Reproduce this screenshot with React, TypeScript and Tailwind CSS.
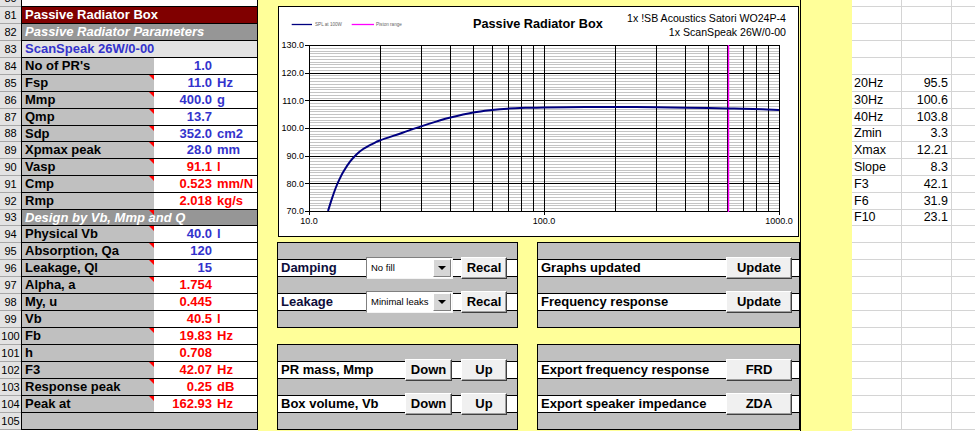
import React from "react";

type Kind = "top" | "title" | "section" | "driver" | "data" | "empty";

type Row = {
  n: number;
  kind: Kind;
  text?: string;
  num?: string;
  unit?: string;
  red?: boolean;
  note?: boolean;
};

const rows: Row[] = [
  { n: 80, kind: "top" },
  { n: 81, kind: "title", text: "Passive Radiator Box" },
  { n: 82, kind: "section", text: "Passive Radiator Parameters" },
  { n: 83, kind: "driver", text: "ScanSpeak 26W/0-00" },
  { n: 84, kind: "data", text: "No of PR's", num: "1.0" },
  { n: 85, kind: "data", text: "Fsp", num: "11.0", unit: "Hz", note: true },
  { n: 86, kind: "data", text: "Mmp", num: "400.0", unit: "g", note: true },
  { n: 87, kind: "data", text: "Qmp", num: "13.7", note: true },
  { n: 88, kind: "data", text: "Sdp", num: "352.0", unit: "cm2", note: true },
  { n: 89, kind: "data", text: "Xpmax peak", num: "28.0", unit: "mm", note: true },
  { n: 90, kind: "data", text: "Vasp", num: "91.1", unit: "l", red: true, note: true },
  { n: 91, kind: "data", text: "Cmp", num: "0.523", unit: "mm/N", red: true, note: true },
  { n: 92, kind: "data", text: "Rmp", num: "2.018", unit: "kg/s", red: true },
  { n: 93, kind: "section", text: "Design by Vb, Mmp and Q", note: true },
  { n: 94, kind: "data", text: "Physical Vb", num: "40.0", unit: "l", note: true },
  { n: 95, kind: "data", text: "Absorption, Qa", num: "120", note: true },
  { n: 96, kind: "data", text: "Leakage, Ql", num: "15", note: true },
  { n: 97, kind: "data", text: "Alpha, a", num: "1.754", red: true, note: true },
  { n: 98, kind: "data", text: "My, u", num: "0.445", red: true },
  { n: 99, kind: "data", text: "Vb", num: "40.5", unit: "l", red: true },
  { n: 100, kind: "data", text: "Fb", num: "19.83", unit: "Hz", red: true, note: true },
  { n: 101, kind: "data", text: "h", num: "0.708", red: true },
  { n: 102, kind: "data", text: "F3", num: "42.07", unit: "Hz", red: true, note: true },
  { n: 103, kind: "data", text: "Response peak", num: "0.25", unit: "dB", red: true, note: true },
  { n: 104, kind: "data", text: "Peak at", num: "162.93", unit: "Hz", red: true, note: true },
  { n: 105, kind: "empty" },
];

const side: Record<number, [string, string]> = {
  85: ["20Hz", "95.5"],
  86: ["30Hz", "100.6"],
  87: ["40Hz", "103.8"],
  88: ["Zmin", "3.3"],
  89: ["Xmax", "12.21"],
  90: ["Slope", "8.3"],
  91: ["F3", "42.1"],
  92: ["F6", "31.9"],
  93: ["F10", "23.1"],
};

function rowHeight(n: number) {
  if (n === 80) return "h-[7px]";
  if (n === 88 || n === 93) return "h-[16px]";
  return "h-[17px]";
}

function Note() {
  return (
    <div className="absolute top-0 right-0 w-0 h-0 border-l-[5px] border-l-transparent border-t-[5px] border-t-[#ff0000]" />
  );
}

function Cells({ row }: { row: Row }) {
  const base = "w-[237px] shrink-0 flex border-l border-r border-b border-black";
  if (row.kind === "top") return <div className={`${base} bg-white`} />;
  if (row.kind === "empty") return <div className={`${base} bg-[#c0c0c0]`} />;
  if (row.kind === "title")
    return (
      <div className={`${base} bg-[#800000] items-center pl-[3px] text-[13px] leading-[16px] font-bold text-white`}>
        {row.text}
      </div>
    );
  if (row.kind === "section")
    return (
      <div className={`${base} relative bg-[#969696] items-center pl-[3px] text-[13px] leading-[16px] font-bold italic text-white`}>
        {row.text}
        {row.note && (
          <div className="absolute top-0 left-[127px] w-0 h-0 border-l-[5px] border-l-transparent border-t-[5px] border-t-[#ff0000]" />
        )}
      </div>
    );
  if (row.kind === "driver")
    return (
      <div className={`${base} bg-[#e3e3e3] items-center pl-[3px] text-[13px] leading-[16px] font-bold text-[#3333cc]`}>
        {row.text}
      </div>
    );
  return (
    <div className={base}>
      <div className="relative w-[132px] shrink-0 bg-[#c0c0c0] flex items-center pl-[3px] text-[13px] leading-[16px] font-bold text-black whitespace-nowrap">
        {row.text}
        {row.note && <Note />}
      </div>
      <div
        className={`flex-1 bg-white flex items-center text-[13px] leading-[16px] font-bold whitespace-nowrap ${
          row.red ? "text-[#ff0000]" : "text-[#3333cc]"
        }`}
      >
        <span className="w-[58px] text-right">{row.num}</span>
        {row.unit && <span className="pl-[5px]">{row.unit}</span>}
      </div>
    </div>
  );
}

function SheetRow({ row }: { row: Row }) {
  return (
    <div className={`flex ${rowHeight(row.n)}`}>
      <div className="w-[21px] shrink-0 bg-[#e3e3e3] border-b border-[#a8a8a8] flex flex-col justify-end overflow-hidden">
        <div className="h-[16px] shrink-0 leading-[16px] text-center text-[11px] text-black">{row.n}</div>
      </div>
      <Cells row={row} />
    </div>
  );
}

function SideRow({ n }: { n: number }) {
  const cell = side[n];
  return (
    <div className={`flex shrink-0 ${rowHeight(n)} border-b border-[#d4d4d4] text-[12.5px] text-black`}>
      <div className="w-[50px] shrink-0 border-r border-[#d4d4d4] flex items-center pl-[2px] whitespace-nowrap">
        {cell ? cell[0] : ""}
      </div>
      <div className="w-[50px] shrink-0 border-r border-[#d4d4d4] flex items-center justify-end pr-[3px]">
        {cell ? cell[1] : ""}
      </div>
    </div>
  );
}

const LX = (f: number) => 30 + 235 * Math.log10(f / 10);
const LY = (db: number) => 204 - ((db - 70) * 166) / 60;
const px = (v: number) => Math.round(v) + 0.5;

const response: [number, number][] = [
  [12.05, 70],
  [12.5, 74.3],
  [13, 78.4],
  [13.5, 81.6],
  [14, 84.2],
  [15, 88],
  [16, 90.6],
  [17, 92.4],
  [18, 93.6],
  [19, 94.6],
  [20, 95.5],
  [25, 98.3],
  [30, 100.6],
  [35, 102.4],
  [40, 103.8],
  [50, 105.6],
  [60, 106.5],
  [70, 107],
  [85, 107.3],
  [100, 107.45],
  [150, 107.6],
  [200, 107.6],
  [300, 107.5],
  [400, 107.35],
  [500, 107.2],
  [600, 107.05],
  [700, 106.95],
  [850, 106.75],
  [1000, 106.5],
];

function curvePath() {
  const p = response.map(([f, d]) => [LX(f), LY(d)]);
  let d = `M${p[0][0].toFixed(2)},${p[0][1].toFixed(2)}`;
  for (let i = 0; i < p.length - 1; i++) {
    const p0 = p[i - 1] ?? p[i];
    const p1 = p[i];
    const p2 = p[i + 1];
    const p3 = p[i + 2] ?? p2;
    const c1x = p1[0] + (p2[0] - p0[0]) / 6;
    const c1y = p1[1] + (p2[1] - p0[1]) / 6;
    const c2x = p2[0] - (p3[0] - p1[0]) / 6;
    const c2y = p2[1] - (p3[1] - p1[1]) / 6;
    d += ` C${c1x.toFixed(2)},${c1y.toFixed(2)} ${c2x.toFixed(2)},${c2y.toFixed(2)} ${p2[0].toFixed(2)},${p2[1].toFixed(2)}`;
  }
  return d;
}

const vlines = [20, 30, 40, 50, 60, 70, 80, 90, 100, 200, 300, 400, 500, 600, 700, 800, 900];
const majors = [70, 80, 90, 100, 110, 120, 130];
const minors: number[] = [];
for (let db = 71; db < 130; db += 1) if (db % 10 !== 0) minors.push(db);

function Chart() {
  const font = "Liberation Sans, Arial, sans-serif";
  return (
    <svg width="519" height="229" viewBox="0 0 519 229" className="block">
      <line x1="12.7" y1="17.5" x2="33" y2="17.5" stroke="#000080" strokeWidth="1.3" />
      <text x="36" y="19" fontSize="4.6" fill="#666" fontFamily={font}>
        SPL at 100W
      </text>
      <line x1="72.7" y1="17.5" x2="95" y2="17.5" stroke="#ff00ff" strokeWidth="1.3" />
      <text x="97" y="19" fontSize="4.6" fill="#666" fontFamily={font}>
        Piston range
      </text>
      <text x="194" y="20.6" fontSize="12.7" fontWeight="bold" fill="#000" fontFamily={font}>
        Passive Radiator Box
      </text>
      <text x="507" y="14.7" fontSize="10.6" fill="#000" textAnchor="end" fontFamily={font}>
        1x !SB Acoustics Satori WO24P-4
      </text>
      <text x="507" y="28.5" fontSize="10.6" fill="#000" textAnchor="end" fontFamily={font}>
        1x ScanSpeak 26W/0-00
      </text>

      {minors.map((db) => (
        <line key={db} x1="30" x2="500" y1={px(LY(db))} y2={px(LY(db))} stroke="#c4c4c4" strokeWidth="1" />
      ))}
      {vlines.map((f) => (
        <line key={f} x1={px(LX(f))} x2={px(LX(f))} y1="38" y2="205" stroke="#000" strokeWidth="1" />
      ))}
      {majors.map((db) => (
        <line key={db} x1="26" x2="500" y1={px(LY(db))} y2={px(LY(db))} stroke="#000" strokeWidth="1" />
      ))}
      {[10, 100, 1000].map((f) => (
        <line key={f} x1={px(LX(f))} x2={px(LX(f))} y1="204" y2="208" stroke="#000" strokeWidth="1" />
      ))}
      <rect x="30.5" y="38.5" width="470" height="166" fill="none" stroke="#000" strokeWidth="1" />
      {majors.map((db) => (
        <text key={db} x="25" y={LY(db) + 3.2} fontSize="9" textAnchor="end" fill="#000" fontFamily={font}>
          {db.toFixed(1)}
        </text>
      ))}
      {[10, 100, 1000].map((f) => (
        <text key={f} x={LX(f)} y="216.5" fontSize="9" textAnchor="middle" fill="#000" fontFamily={font}>
          {f.toFixed(1)}
        </text>
      ))}
      <line x1="449.5" x2="449.5" y1="38" y2="205" stroke="#ff00ff" strokeWidth="1.4" />
      <path d={curvePath()} fill="none" stroke="#000080" strokeWidth="2" strokeLinejoin="round" />
    </svg>
  );
}

function Btn({ label, w }: { label: string; w: string }) {
  return (
    <div
      className={`${w} h-[22px] shrink-0 bg-[#f0f0f0] border border-t-white border-l-white border-r-[#404040] border-b-[#404040] shadow-[inset_-1px_-1px_0_#a0a0a0] flex items-center justify-center text-[13px] font-bold text-black`}
    >
      {label}
    </div>
  );
}

function Select({ value }: { value: string }) {
  return (
    <div className="w-[87px] h-[22px] shrink-0 flex bg-white border border-t-[#808080] border-l-[#808080] border-r-[#f4f4f4] border-b-[#f4f4f4] p-[1px]">
      <div className="flex-1 flex items-center pl-[3px] text-[9.5px] text-black whitespace-nowrap overflow-hidden">
        {value}
      </div>
      <div className="w-[18px] shrink-0 bg-[#d6d6d6] border border-t-white border-l-white border-r-[#808080] border-b-[#808080] flex items-center justify-center">
        <div className="w-0 h-0 border-l-[4px] border-r-[4px] border-t-[4px] border-l-transparent border-r-transparent border-t-black" />
      </div>
    </div>
  );
}

function PanelRow({
  label,
  dark,
  gap,
  pr,
  children,
}: {
  label: string;
  dark?: boolean;
  gap: string;
  pr: string;
  children: React.ReactNode;
}) {
  return (
    <div className={`relative h-[18px] shrink-0 bg-white border-y border-black flex items-center ${pr}`}>
      <div
        className={`flex-1 pl-[3px] text-[13px] leading-[16px] font-bold whitespace-nowrap ${
          dark ? "text-[#0e0e3a]" : "text-black"
        }`}
      >
        {label}
      </div>
      <div className={`flex items-center ${gap}`}>{children}</div>
    </div>
  );
}

function Panel({ children }: { children: React.ReactNode }) {
  const [first, second] = React.Children.toArray(children);
  return (
    <div className="h-[86px] bg-[#c0c0c0] border border-black flex flex-col">
      <div className="h-[16px] shrink-0" />
      {first}
      <div className="h-[16px] shrink-0" />
      {second}
      <div className="h-[16px] shrink-0" />
    </div>
  );
}

export default function App() {
  return (
    <div className="w-[975px] h-[431px] overflow-hidden flex bg-white font-['Liberation_Sans',Arial,sans-serif]">
      <div className="w-[258px] shrink-0 flex flex-col">
        {rows.map((r) => (
          <SheetRow key={r.n} row={r} />
        ))}
      </div>

      <div className="w-[543px] shrink-0 bg-[#ffff99] border-r border-black flex flex-col">
        <div className="ml-[20px] mt-[6px] w-[521px] h-[231px] shrink-0 bg-white border border-black">
          <Chart />
        </div>
        <div className="ml-[19px] mt-[5px] grid grid-cols-[241px_263px] gap-x-[19px] gap-y-[16px]">
          <Panel>
            <PanelRow label="Damping" dark gap="gap-[8px]" pr="pr-[10px]">
              <Select value="No fill" />
              <Btn label="Recal" w="w-[46px]" />
            </PanelRow>
            <PanelRow label="Leakage" dark gap="gap-[8px]" pr="pr-[10px]">
              <Select value="Minimal leaks" />
              <Btn label="Recal" w="w-[46px]" />
            </PanelRow>
          </Panel>
          <Panel>
            <PanelRow label="Graphs updated" gap="gap-0" pr="pr-[7px]">
              <Btn label="Update" w="w-[66px]" />
            </PanelRow>
            <PanelRow label="Frequency response" gap="gap-0" pr="pr-[7px]">
              <Btn label="Update" w="w-[66px]" />
            </PanelRow>
          </Panel>
          <Panel>
            <PanelRow label="PR mass, Mmp" gap="gap-[9px]" pr="pr-[10px]">
              <Btn label="Down" w="w-[47px]" />
              <Btn label="Up" w="w-[46px]" />
            </PanelRow>
            <PanelRow label="Box volume, Vb" gap="gap-[9px]" pr="pr-[10px]">
              <Btn label="Down" w="w-[47px]" />
              <Btn label="Up" w="w-[46px]" />
            </PanelRow>
          </Panel>
          <Panel>
            <PanelRow label="Export frequency response" gap="gap-0" pr="pr-[7px]">
              <Btn label="FRD" w="w-[66px]" />
            </PanelRow>
            <PanelRow label="Export speaker impedance" gap="gap-0" pr="pr-[7px]">
              <Btn label="ZDA" w="w-[66px]" />
            </PanelRow>
          </Panel>
        </div>
      </div>

      <div className="w-[51px] shrink-0 bg-[#ffff99]" />

      <div className="flex-1 flex flex-col">
        {rows.map((r) => (
          <SideRow key={r.n} n={r.n} />
        ))}
      </div>
    </div>
  );
}
